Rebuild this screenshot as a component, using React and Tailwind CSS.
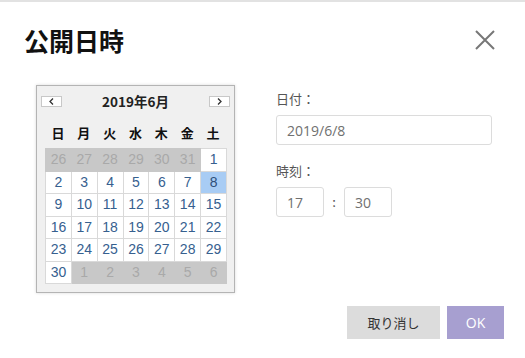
import React from "react";

const weeks = [
  [26, 27, 28, 29, 30, 31, 1],
  [2, 3, 4, 5, 6, 7, 8],
  [9, 10, 11, 12, 13, 14, 15],
  [16, 17, 18, 19, 20, 21, 22],
  [23, 24, 25, 26, 27, 28, 29],
  [30, 1, 2, 3, 4, 5, 6],
];

function Calendar() {
  return (
    <div className="w-[199px] h-[208px] border border-[#b4b4b4] bg-[#f0f0f0] shadow-[0_0_3px_rgba(0,0,0,0.15)] px-[8px] pt-[7px]">
      <div className="flex items-center justify-between -mx-[4px]">
        <button className="w-[21px] h-[11px] bg-white border border-[#c8c8c8] flex items-center justify-center">
          <svg width="5" height="7" viewBox="0 0 5 7">
            <path d="M4 0.5 L1 3.5 L4 6.5" fill="none" stroke="#333" strokeWidth="1.3" />
          </svg>
        </button>
        <div className="text-[13.5px] font-bold text-[#222] leading-[16px] font-['Noto_Sans_CJK_JP',sans-serif]">
          2019年6月
        </div>
        <button className="w-[21px] h-[11px] bg-white border border-[#c8c8c8] flex items-center justify-center">
          <svg width="5" height="7" viewBox="0 0 5 7">
            <path d="M1 0.5 L4 3.5 L1 6.5" fill="none" stroke="#333" strokeWidth="1.3" />
          </svg>
        </button>
      </div>
      <div className="grid grid-cols-7 mt-[15px] mb-[6px] text-[13px] font-bold text-[#111] leading-[18px] font-['Noto_Sans_CJK_JP',sans-serif]">
        {["日", "月", "火", "水", "木", "金", "土"].map((d) => (
          <div key={d} className="text-center">{d}</div>
        ))}
      </div>
      <table className="border-collapse w-[182px] table-fixed font-['Liberation_Sans',sans-serif] text-[14px]">
        <tbody>
          {weeks.map((w, ri) => (
            <tr key={ri} className="h-[22.5px]">
              {w.map((d, ci) => {
                const out = (ri === 0 && ci < 6) || (ri === 5 && ci > 0);
                const sel = ri === 1 && ci === 6;
                return (
                  <td
                    key={ci}
                    className={
                      out
                        ? "p-0 text-center bg-[#c8c8c8] text-[#a9a9a9] border border-[#c8c8c8]"
                        : sel
                        ? "p-0 text-center bg-[#a8ccf4] text-[#2f4f7a] border border-[#d9d9d9]"
                        : "p-0 text-center bg-white text-[#36608f] border border-[#d9d9d9]"
                    }
                  >
                    {d}
                  </td>
                );
              })}
            </tr>
          ))}
        </tbody>
      </table>
    </div>
  );
}

export default function App() {
  return (
    <div className="w-[525px] h-[358px] bg-white border-t-2 border-[#e2e2e2] flex flex-col font-['Noto_Sans_CJK_JP',sans-serif]">
      <div className="flex items-center justify-between pl-[24px] pr-[30px] h-[76px]">
        <h1 className="text-[25px] font-bold text-[#111] leading-[36px]">公開日時</h1>
        <svg width="20" height="20" viewBox="0 0 20 20">
          <path d="M1 1 L19 19 M19 1 L1 19" stroke="#777" strokeWidth="2" />
        </svg>
      </div>
      <div className="flex pl-[36px] mt-[7px]">
        <Calendar />
        <div className="ml-[41px] pt-[4px] text-[#555]">
          <div className="text-[13px] leading-[20px]">日付：</div>
          <div className="mt-[6px] w-[216px] h-[30px] border border-[#dcdcdc] rounded-[3px] pl-[10px] flex items-center text-[14px] text-[#707070] font-['Open_Sans',sans-serif]">
            2019/6/8
          </div>
          <div className="mt-[16px] text-[13px] leading-[20px]">時刻：</div>
          <div className="mt-[6px] flex items-center">
            <div className="w-[48px] h-[30px] border border-[#dcdcdc] rounded-[3px] pl-[10px] flex items-center text-[14px] text-[#707070] font-['Open_Sans',sans-serif]">
              17
            </div>
            <div className="w-[20px] text-center text-[13px] text-[#555]">:</div>
            <div className="w-[48px] h-[30px] border border-[#dcdcdc] rounded-[3px] pl-[10px] flex items-center text-[14px] text-[#707070] font-['Open_Sans',sans-serif]">
              30
            </div>
          </div>
        </div>
      </div>
      <div className="mt-auto mb-[19px] pr-[21px] flex justify-end gap-[7px]">
        <button className="w-[93px] h-[33px] bg-[#dcdcdc] text-[#333] text-[13px]">取り消し</button>
        <button className="w-[57px] h-[33px] bg-[#a79fd0] text-white text-[14px] font-['Open_Sans',sans-serif]">OK</button>
      </div>
    </div>
  );
}
